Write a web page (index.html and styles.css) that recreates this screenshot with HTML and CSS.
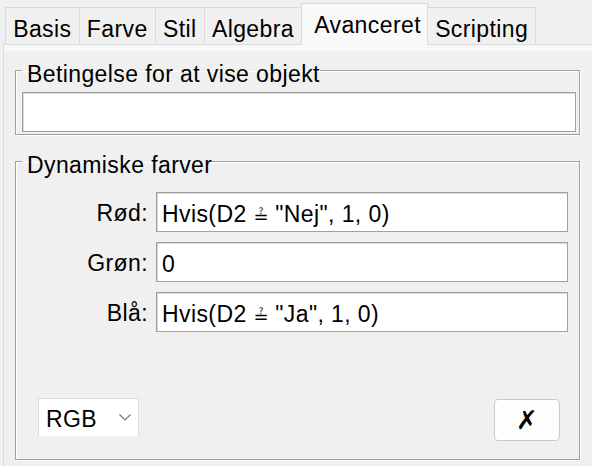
FILE: index.html
```html
<!DOCTYPE html>
<html>
<head>
<meta charset="utf-8">
<link rel="stylesheet" href="styles.css">
</head>
<body>
<div class="tabs">
  <div class="tab">Basis</div>
  <div class="tab">Farve</div>
  <div class="tab">Stil</div>
  <div class="tab">Algebra</div>
  <div class="tab selected">Avanceret</div>
  <div class="tab">Scripting</div>
</div>
<div class="panel">
  <fieldset class="group group-cond">
    <legend>Betingelse for at vise objekt</legend>
    <div class="field field-wide"></div>
  </fieldset>
  <fieldset class="group group-dyn">
    <legend>Dynamiske farver</legend>
    <div class="rows">
      <div class="label">Rød:</div>
      <div class="field">Hvis(D2 <span class="sym">≟</span> "Nej", 1, 0)</div>
      <div class="label">Grøn:</div>
      <div class="field">0</div>
      <div class="label">Blå:</div>
      <div class="field">Hvis(D2 <span class="sym">≟</span> "Ja", 1, 0)</div>
    </div>
    <div class="bottom">
      <div class="select">
        <span>RGB</span>
        <svg class="chev" width="12" height="7" viewBox="0 0 12 7"><path d="M0.5 0.5 L6 6 L11.5 0.5" fill="none" stroke="#7a7a7a" stroke-width="1.2"/></svg>
      </div>
      <div class="button"><span class="cross">✗</span></div>
    </div>
  </fieldset>
</div>
</body>
</html>
```
FILE: styles.css
```css
html, body {
  margin: 0;
  padding: 0;
}
body {
  width: 592px;
  height: 466px;
  overflow: hidden;
  background: #f0f0f0;
  font-family: "Liberation Sans", Arial, sans-serif;
  font-size: 23px;
  letter-spacing: 0.4px;
  color: #000;
  display: flex;
  flex-direction: column;
}
.tabs {
  display: flex;
  align-items: flex-end;
  height: 44px;
  padding-left: 5px;
  position: relative;
  z-index: 1;
  flex: none;
}
.tab {
  box-sizing: border-box;
  height: 37px;
  border: 1px solid #dadada;
  border-bottom: 0;
  margin-right: -1px;
  padding: 8px 7.2px 0;
  line-height: 26px;
  background: #f0f0f0;
}
.tab.selected {
  height: 42px;
  margin-bottom: -1px;
  padding: 8px 6px 0 12px;
  background: #f9f9f9;
  position: relative;
  z-index: 2;
}
.panel {
  flex: 1;
  margin-left: 3px;
  border-top: 1px solid #dadada;
  border-left: 1px solid #dadada;
  box-shadow: inset 0 6px 0 #f8f8f8;
  display: flex;
  flex-direction: column;
}
.group {
  margin: 0 12px 0 11px;
  border: 1px solid #a0a0a0;
  box-shadow: 1px 1px 0 #fff, inset 1px 1px 0 #fff;
  min-width: 0;
}
.group legend {
  padding: 9px 0 0 5px;
  line-height: 25px;
}
.group-cond {
  margin-top: 8px;
  padding: 5px 3px 2px 6px;
}
.group-dyn {
  margin-top: 9px;
  padding: 14px 11px 18px 22px;
}
.group-dyn legend {
  margin-left: -16px;
}
.field {
  box-sizing: border-box;
  height: 40px;
  background: #fff;
  border: 1px solid #a0a0a0;
  box-shadow: inset 1px 1px 0 #d8d8d8;
  padding: 4px 5px 0;
  line-height: 34px;
  white-space: nowrap;
  overflow: hidden;
}
.sym {
  font-family: "DejaVu Sans", sans-serif;
  font-size: 18px;
  letter-spacing: 0;
  vertical-align: -1px;
}
.rows {
  display: grid;
  grid-template-columns: 110px 1fr;
  column-gap: 8px;
  row-gap: 10px;
  align-items: center;
}
.label {
  text-align: right;
  padding-top: 3px;
}
.bottom {
  display: flex;
  justify-content: space-between;
  align-items: flex-start;
  margin-top: 66px;
}
.select {
  box-sizing: border-box;
  width: 101px;
  height: 39px;
  background: #fff;
  border: 1px solid #dadada;
  border-bottom-color: #f4f4f4;
  display: flex;
  align-items: center;
  justify-content: space-between;
  padding: 3px 7px 0 7px;
}
.chev {
  margin-top: -3px;
}
.button {
  box-sizing: border-box;
  width: 66px;
  height: 42px;
  margin-top: 1px;
  margin-right: 8px;
  background: #fdfdfd;
  border: 1px solid #cacaca;
  border-radius: 4px;
  display: flex;
  align-items: center;
  justify-content: center;
}
.cross {
  font-family: "DejaVu Sans", sans-serif;
  font-size: 26px;
  font-weight: bold;
  letter-spacing: 0;
}
```
